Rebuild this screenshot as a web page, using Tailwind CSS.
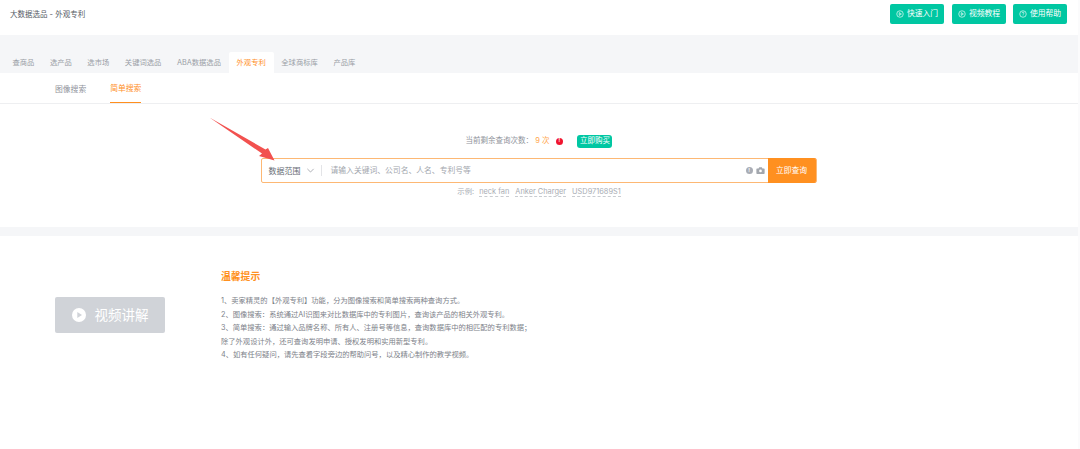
<!DOCTYPE html>
<html lang="zh-CN">

<head>
  <meta charset="UTF-8" />
  <title>大数据选品 - 外观专利</title>
  <script src="https://cdn.jsdelivr.net/npm/@tailwindcss/browser@4"></script>
</head>

<body class="relative h-[449px] w-[1080px] overflow-hidden bg-white font-['Inter','Noto_Sans_CJK_SC',sans-serif] text-[7.5px] text-[#8f939b]">

  <!-- Header -->
  <header class="flex h-[35px] items-start justify-between pl-[10px] pr-[13px]">
    <div class="pt-[9px] leading-[12px] text-[#555a63]">大数据选品 - 外观专利</div>
    <div class="flex gap-2 pt-1 text-[7.8px]">
      <button class="flex h-5 w-[54px] items-center justify-center gap-[3px] rounded-[2px] bg-[#00c7a2] text-white">
        <svg class="size-2" viewBox="0 0 16 16" fill="none" stroke="currentColor" stroke-width="1.3">
          <circle cx="8" cy="8" r="6.5" />
          <path d="M6.5 5.2 10.8 8l-4.3 2.8z" />
        </svg>
        快速入门
      </button>
      <button class="flex h-5 w-[54px] items-center justify-center gap-[3px] rounded-[2px] bg-[#00c7a2] text-white">
        <svg class="size-2" viewBox="0 0 16 16" fill="none" stroke="currentColor" stroke-width="1.3">
          <circle cx="8" cy="8" r="6.5" />
          <path d="M6.5 5.2 10.8 8l-4.3 2.8z" />
        </svg>
        视频教程
      </button>
      <button class="ml-[-1px] flex h-5 w-[54px] items-center justify-center gap-[3px] rounded-[2px] bg-[#00c7a2] text-white">
        <svg class="size-2" viewBox="0 0 16 16" fill="none" stroke="currentColor" stroke-width="1.3">
          <circle cx="8" cy="8" r="6.5" />
          <path d="M6.2 6.3a1.9 1.9 0 1 1 2.7 1.7c-.6.3-.9.7-.9 1.3M8 11v.8" />
        </svg>
        使用帮助
      </button>
    </div>
  </header>

  <!-- Main tabs -->
  <nav class="flex h-[38px] items-end bg-[#f5f6f8] pl-[4.6px] text-[7.3px]">
    <a class="flex h-[21px] items-center px-[7.8px] pt-[1px] text-[#9a9ea6]">查商品</a>
    <a class="flex h-[21px] items-center px-[7.8px] pt-[1px] text-[#9a9ea6]">选产品</a>
    <a class="flex h-[21px] items-center px-[7.8px] pt-[1px] text-[#9a9ea6]">选市场</a>
    <a class="flex h-[21px] items-center px-[7.8px] pt-[1px] text-[#9a9ea6]">关键词选品</a>
    <a class="flex h-[21px] items-center px-[7.8px] pt-[1px] text-[#9a9ea6]">ABA数据选品</a>
    <a class="flex h-[21px] items-center rounded-t-[2px] bg-white px-[7.8px] pt-[1px] text-[#ff8f1f]">外观专利</a>
    <a class="flex h-[21px] items-center px-[7.8px] pt-[1px] text-[#9a9ea6]">全球商标库</a>
    <a class="flex h-[21px] items-center px-[7.8px] pt-[1px] text-[#9a9ea6]">产品库</a>
  </nav>

  <!-- Sub tabs -->
  <div class="flex h-[31px] gap-6 border-b border-[#eeeff1] pl-[55px] text-[7.8px]">
    <a class="flex h-[30px] items-center pt-[3px] text-[#8f939b]">图像搜索</a>
    <a class="flex h-[30px] items-center border-b-[1.5px] border-[#ff8f1f] pt-[3px] text-[#ff8f1f]">简单搜索</a>
  </div>

  <!-- Search -->
  <section class="flex h-[123px] flex-col items-center">
    <div class="ml-[-2px] mt-[30px] flex h-[14px] items-center">
      <span>当前剩余查询次数： <span class="text-[#ffa64d]">9 次</span></span>
      <span class="ml-[6.5px] flex size-[7px] items-center justify-center rounded-full bg-[#f0142f] text-[5px] font-bold text-white">!</span>
      <span class="ml-[14.5px] flex h-[13px] w-[35px] items-center justify-center rounded-[3px] bg-[#00c7a2] text-white">立即购买</span>
    </div>
    <div class="ml-[-3px] mt-[10px] flex h-[25px] w-[556px] items-center rounded-[2px] border border-[#fdb874] text-[7.8px]">
      <span class="pl-[7px] text-[8px] text-[#666b74]">数据范围</span>
      <svg class="ml-[5px] size-[9px] text-[#8f939b]" viewBox="0 0 10 10" fill="none" stroke="currentColor" stroke-width="0.8">
        <path d="M1.5 3.2 5 6.7l3.5-3.5" />
      </svg>
      <span class="ml-[6px] h-[11px] w-px bg-[#e3e4e7]"></span>
      <span class="ml-[9px] flex-1 text-[#a3a7ae]">请输入关键词、公司名、人名、专利号等</span>
      <span class="flex size-[7px] items-center justify-center rounded-full bg-[#a9adb5] text-[5px] font-bold text-white">!</span>
      <svg class="ml-[3px] size-[9px] text-[#a3a7ae]" viewBox="0 0 12 12" fill="currentColor">
        <path d="M4.2 1.8h3.6l.8 1.4h2c.5 0 .9.4.9.9v5.6c0 .5-.4.9-.9.9H1.4c-.5 0-.9-.4-.9-.9V4.100c0-.5.4-.9.9-.9h2z" />
        <circle cx="6" cy="6.600" r="1.800" fill="#fff" />
      </svg>
      <button class="ml-[3px] h-[25px] w-[48px] rounded-r-[2px] bg-[#ff9020] text-white">立即查询</button>
    </div>
    <div class="ml-[-2px] mt-[3px] flex h-[12px] items-center gap-[6px] text-[7.4px] text-[#a9adb4]">
      <span class="mr-[-1px]">示例:</span>
      <span class="border-b border-dashed border-[#c9ccd1] leading-[8px]">neck fan</span>
      <span class="border-b border-dashed border-[#c9ccd1] leading-[8px]">Anker Charger</span>
      <span class="border-b border-dashed border-[#c9ccd1] leading-[8px]">USD971689S1</span>
    </div>
  </section>

  <!-- Divider band -->
  <div class="h-[9px] bg-[#f5f6f8]"></div>

  <!-- Tips -->
  <section class="flex pl-[55px] pt-[34px]">
    <button class="mt-[27px] flex h-[36px] w-[110px] items-center justify-center gap-[9px] rounded-[2px] bg-[#d0d3d8] text-[13.500px] text-white">
      <svg class="size-[14px]" viewBox="0 0 14 14">
        <circle cx="7" cy="7" r="7" fill="#fff" />
        <path d="M5.300 4 10 7l-4.700 3z" fill="#d0d3d8" />
      </svg>
      视频讲解
    </button>
    <div class="ml-[56px] text-[#7d8189]">
      <h2 class="text-[9.800px] font-bold leading-[14px] text-[#ff9020]">温馨提示</h2>
      <div class="mt-[10px] text-[7.290px] leading-[13.500px]">
        <p>1、卖家精灵的【外观专利】功能，分为图像搜索和简单搜索两种查询方式。</p>
        <p>2、图像搜索：系统通过AI识图来对比数据库中的专利图片，查询该产品的相关外观专利。</p>
        <p>3、简单搜索：通过输入品牌名称、所有人、注册号等信息，查询数据库中的相匹配的专利数据；</p>
        <p>除了外观设计外，还可查询发明申请、授权发明和实用新型专利。</p>
        <p>4、如有任何疑问，请先查看字段旁边的帮助问号，以及精心制作的教学视频。</p>
      </div>
    </div>
  </section>

  <!-- Pale strip on the right edge of the screenshot -->
  <div class="absolute inset-y-0 right-0 w-[2px] bg-[#fbfbfc]"></div>

  <!-- Red annotation arrow -->
  <svg class="absolute left-[205px] top-[114px] h-[52px] w-[74px]" viewBox="0 0 74 52">
    <path d="M4.500 3.500 60.500 35.500 63 34 69.500 46.500 54 42 57 39.500z" fill="#f2514f" />
  </svg>
</body>

</html>
